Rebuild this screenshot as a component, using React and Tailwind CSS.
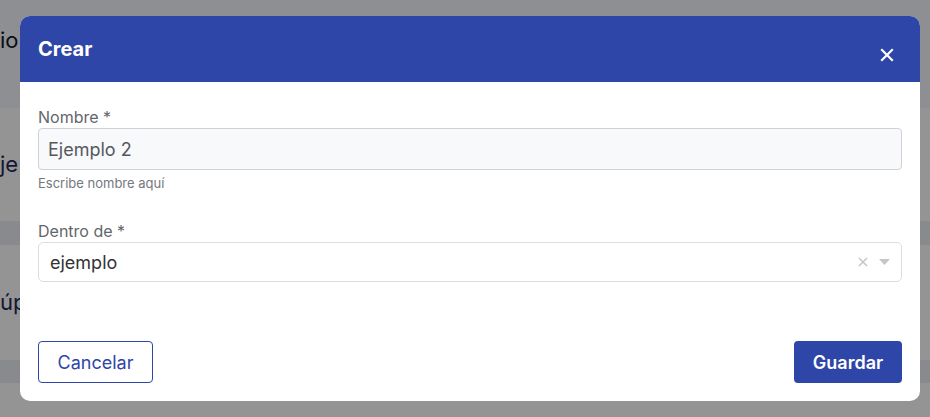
import React from 'react';

const Page = () => (
  <div className="h-[417px] w-[930px] overflow-hidden bg-[#f5f6fb] font-['Inter',sans-serif]">
    <div className="flex h-[108px] items-start pt-[24px]">
      <span className="text-[22px] text-[#111827]">io</span>
    </div>
    <div className="flex h-[113px] items-center bg-white">
      <span className="text-[22px] text-[#1f2a5c]">je</span>
    </div>
    <div className="h-[24px] bg-[#eceef5]" />
    <div className="flex h-[115px] items-center bg-white">
      <span className="text-[22px] text-[#1f2a5c]">úp</span>
    </div>
    <div className="h-[23px] bg-[#eceef5]" />
    <div className="h-[40px] bg-white" />
  </div>
);

const Modal = () => (
  <div className="absolute inset-0 bg-black/[0.42]">
    <div className="absolute left-[20px] top-[16px] w-[900px] overflow-hidden rounded-[10px] bg-white font-['Inter',sans-serif]">
      <div className="flex h-[66px] items-center justify-between bg-[#2e46a8] pl-[18px] pr-[26px]">
        <h2 className="text-[20px] font-bold text-white">Crear</h2>
        <button className="mt-[12px] text-white">
          <svg width="14" height="14" viewBox="0 0 14 14" fill="none" stroke="currentColor" strokeWidth="2.2" strokeLinecap="square">
            <path d="M2 2L12 12M12 2L2 12" />
          </svg>
        </button>
      </div>

      <div className="px-[18px] pt-[24px] pb-[18px]">
        <label className="block text-[16px] leading-[22px] text-[#63666b]">Nombre *</label>
        <div className="flex h-[42px] items-center rounded-[4px] border border-[#cfd1d6] bg-[#f8f9fb] px-[9px] text-[18px] text-[#55585e]">
          Ejemplo 2
        </div>
        <p className="mt-[4px] text-[13px] leading-[18px] text-[#75787e]">Escribe nombre aquí</p>

        <label className="mt-[28px] block text-[16px] leading-[22px] text-[#63666b]">Dentro de *</label>
        <div className="flex h-[40px] items-center justify-between rounded-[5px] border border-[#dcdde1] bg-white pl-[11px] pr-[11px] text-[18px] text-[#333]">
          <span>ejemplo</span>
          <div className="flex items-center gap-[11px] text-[#c4c6ca]">
            <svg width="10" height="10" viewBox="0 0 10 10" fill="none" stroke="currentColor" strokeWidth="1.6">
              <path d="M1 1L9 9M9 1L1 9" />
            </svg>
            <svg width="11" height="6" viewBox="0 0 11 6" fill="currentColor">
              <path d="M0 0H11L5.5 6Z" />
            </svg>
          </div>
        </div>

        <div className="mt-[59px] flex items-center justify-between">
          <button className="h-[42px] w-[115px] rounded-[4px] border border-[#2e46a8] text-[18px] text-[#2e46a8]">
            Cancelar
          </button>
          <button className="h-[42px] w-[108px] rounded-[4px] bg-[#2e46a8] text-[18px] font-semibold text-white">
            Guardar
          </button>
        </div>
      </div>
    </div>
  </div>
);

export default function App() {
  return (
    <div className="relative h-[417px] w-[930px] overflow-hidden">
      <Page />
      <Modal />
    </div>
  );
}
